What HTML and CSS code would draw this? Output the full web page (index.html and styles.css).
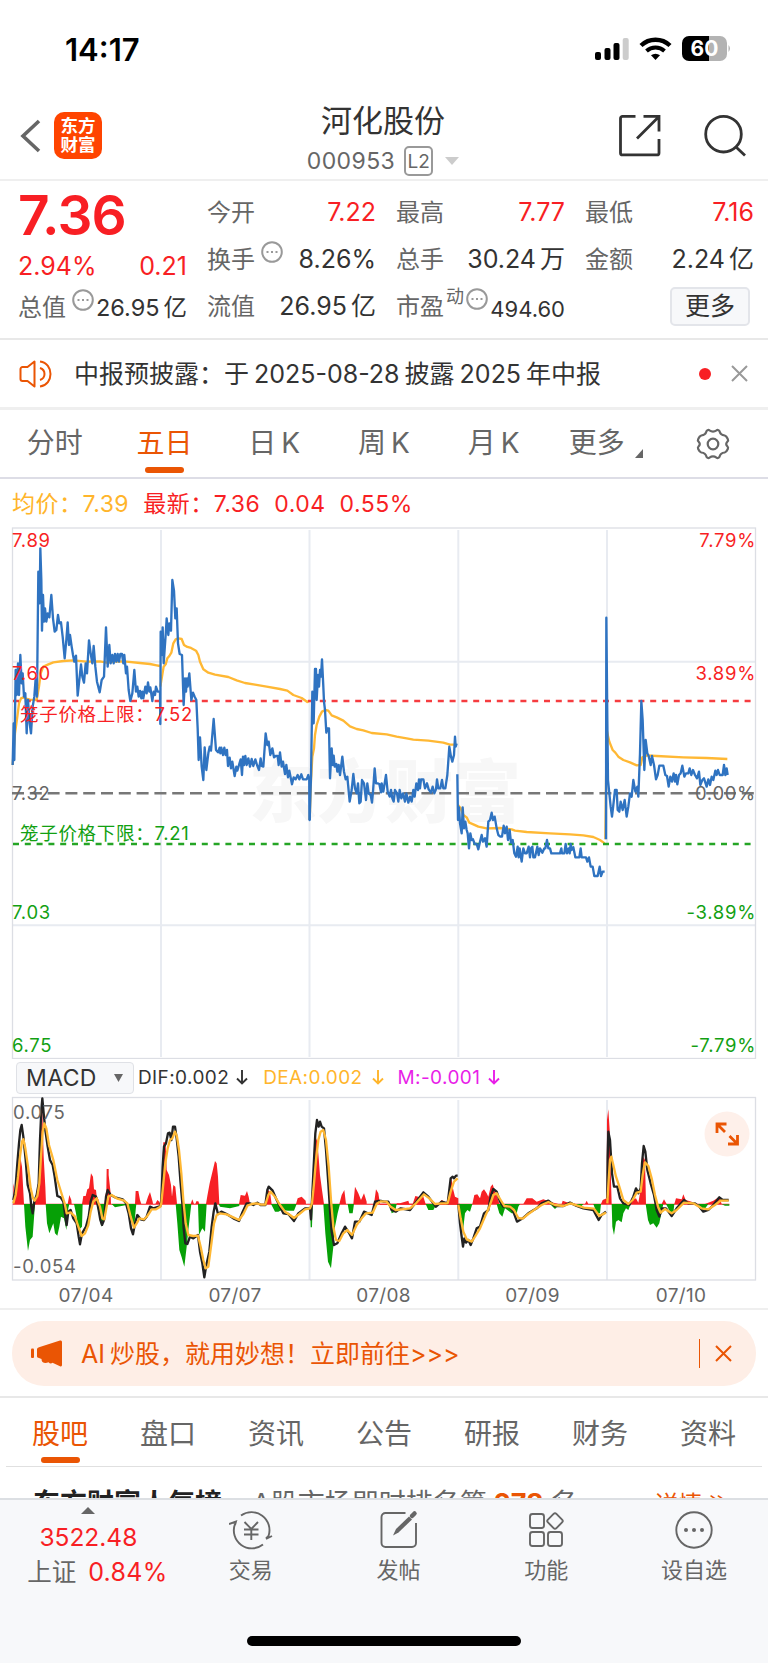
FILE: index.html
```
<!DOCTYPE html>
<html lang="zh-CN">
<head>
<meta charset="UTF-8">
<title>河化股份 000953</title>
<link rel="stylesheet" href="styles.css">
</head>
<body>

<div class="page">
    <div class="status-bar">
        <span class="time">14:17</span>
        <svg class="status-icons" width="140" height="28" viewBox="0 0 140 28">
            <rect x="0" y="17" width="6" height="8" rx="2"/>
            <rect x="9.500" y="13" width="6" height="12" rx="2"/>
            <rect x="18.500" y="8" width="6" height="17" rx="2"/>
            <rect x="27.700" y="3" width="6" height="22" rx="2" fill="#ccc"/>
            <path d="M46 10.500A21 21 0 0 1 75 10.500" fill="none" stroke="#000" stroke-width="4.400"/>
            <path d="M51.500 16A13.500 13.500 0 0 1 69.500 16" fill="none" stroke="#000" stroke-width="4"/>
            <path d="M56 20.300A7 7 0 0 1 65 20.300L60.500 25Z"/>
            <path d="M94 1h21v25h-21a7 7 0 0 1-7-7v-11a7 7 0 0 1 7-7z"/>
            <path d="M114 1h11a7 7 0 0 1 7 7v11a7 7 0 0 1-7 7h-11z" fill="#b3b3b3"/>
            <path d="M133.500 10q3 3.500 0 7z" fill="#b3b3b3"/>
            <text class="battery-text" x="109.500" y="21">60</text>
        </svg>
    </div>

    <div class="header">
        <div class="header-left">
            <svg width="22" height="34" viewBox="0 0 22 34"><path d="M19 2L3 17L19 32" fill="none" stroke="#666" stroke-width="3.600"/></svg>
            <div class="logo">东方<br>财富</div>
        </div>
        <div class="header-title">
            <div class="stock-name">河化股份</div>
            <div class="stock-code">
                <span>000953</span>
                <span class="level">L2</span>
                <svg width="14" height="8" viewBox="0 0 14 8"><path d="M0 0h14l-7 8z" fill="#ccc"/></svg>
            </div>
        </div>
        <div class="header-right">
            <svg width="44" height="44" viewBox="0 0 44 44" fill="none" stroke="#333" stroke-width="2.800">
                <path d="M17.500 2.400H4.500a2 2 0 0 0-2 2v34.500a2 2 0 0 0 2 2H39a2 2 0 0 0 2-2V25"/>
                <path d="M25.500 2.400H41V17.500M41 2.400L19 24.500"/>
            </svg>
            <svg width="44" height="44" viewBox="0 0 44 44" fill="none" stroke="#333" stroke-width="2.800">
                <circle cx="20.500" cy="20.200" r="17.800"/>
                <path d="M33 33L42 41.500"/>
            </svg>
        </div>
    </div>

    <div class="quote">
        <div class="quote-main">
            <div class="price">7.36</div>
            <div class="cell change"><span>2.94%</span><span>0.21</span></div>
            <div class="cell cap">
                <span class="label">总值<svg class="dots" width="22" height="22" viewBox="0 0 22 22"><circle cx="11" cy="11" r="9.800"/><path d="M5.500 11h2M10 11h2M14.500 11h2"/></svg></span>
                <span class="value small">26.95<i></i>亿</span>
            </div>
        </div>
        <div class="quote-col">
            <div class="cell"><span class="label">今开</span><span class="value red">7.22</span></div>
            <div class="cell">
                <span class="label">换手<svg class="dots" width="22" height="22" viewBox="0 0 22 22"><circle cx="11" cy="11" r="9.800"/><path d="M5.500 11h2M10 11h2M14.500 11h2"/></svg></span>
                <span class="value">8.26%</span>
            </div>
            <div class="cell"><span class="label">流值</span><span class="value">26.95<i></i>亿</span></div>
        </div>
        <div class="quote-col">
            <div class="cell"><span class="label">最高</span><span class="value red">7.77</span></div>
            <div class="cell"><span class="label">总手</span><span class="value">30.24<i></i>万</span></div>
            <div class="cell">
                <span class="label">市盈<sup>动</sup><svg class="dots tight" width="22" height="22" viewBox="0 0 22 22"><circle cx="11" cy="11" r="9.800"/><path d="M5.500 11h2M10 11h2M14.500 11h2"/></svg></span>
                <span class="value tiny">494.60</span>
            </div>
        </div>
        <div class="quote-col">
            <div class="cell"><span class="label">最低</span><span class="value red">7.16</span></div>
            <div class="cell"><span class="label">金额</span><span class="value">2.24<i></i>亿</span></div>
            <div class="cell more-cell"><span class="more-button">更多</span></div>
        </div>
    </div>

    <div class="notice">
        <svg width="34" height="30" viewBox="0 0 34 30" fill="none" stroke="#ea5504" stroke-width="2">
            <path d="M15.500 2.500v25l-7-5.500H3.500a2 2 0 0 1-2-2V10a2 2 0 0 1 2-2h5z" stroke-linejoin="round"/>
            <path d="M21 2.500c14 2 14 23 0 25M21 9c6 2 6 10 0 12"/>
        </svg>
        <span class="notice-text">中报预披露：于<i></i>2025-08-28<i></i>披露<i></i>2025<i></i>年中报</span>
        <span class="red-dot"></span>
        <svg width="17" height="17" viewBox="0 0 17 17"><path d="M1 1l15 15M16 1l-15 15" stroke="#999" stroke-width="2"/></svg>
    </div>

    <div class="k-tabs">
        <span>分时</span>
        <span class="active">五日</span>
        <span>日<i></i>K</span>
        <span>周<i></i>K</span>
        <span>月<i></i>K</span>
        <span class="k-more">更多<svg width="8" height="9" viewBox="0 0 8 9"><path d="M8 0v9H0z" fill="#666"/></svg></span>
        <span class="k-gear"><svg width="34" height="32" viewBox="0 0 34 32" fill="none" stroke="#666" stroke-width="2.200" stroke-linejoin="round">
            <path d="M10.500 3.200Q12 1.200 13.500 2.400Q17 4.800 20.500 2.400Q22 1.200 23.500 3.200Q24.500 7 28.700 7.500Q30.500 8 31.800 11Q32.500 12.500 31.500 13.500Q29 16 31.500 18.500Q32.500 19.500 31.800 21Q30.500 24 28.700 24.500Q24.500 25 23.500 28.800Q22 30.800 20.500 29.600Q17 27.200 13.500 29.600Q12 30.800 10.500 28.800Q9.500 25 5.300 24.500Q3.500 24 2.200 21Q1.500 19.500 2.500 18.500Q5 16 2.500 13.500Q1.500 12.500 2.200 11Q3.500 8 5.300 7.500Q9.500 7 10.500 3.200Z"/>
            <circle cx="17" cy="16" r="5.300"/>
        </svg></span>
    </div>

    <div class="averages">
        <span class="orange">均价：7.39</span>
        <span>最新：7.36</span>
        <span>0.04</span>
        <span>0.55%</span>
    </div>

    <svg class="price-chart" width="768" height="532" viewBox="0 527 768 532">
        <text class="watermark" x="385" y="817">东方财富</text>
        <g class="grid">
            <path d="M161 530V1057M309.500 530V1057M458.300 530V1057M607 530V1057M12 661.700H755M12 925.300H755"/>
            <rect class="frame" x="12.500" y="528" width="743" height="530.500"/>
        </g>
        <g class="avg-line">
            <polyline transform="translate(0 520) scale(.33333)" points="38,735 45,640 52,590 57,550 63,535 70,532 78,536 90,539 110,540 117,500 122,460 130,440 145,433 160,427 190,423 220,421 260,425 300,424 320,428 350,424 380,425 420,429 450,432 470,436 480,438"/>
            <polyline transform="translate(0 520) scale(.33333)" points="481,500 486,470 491,440 497,433 502,415 508,408 514,398 520,370 527,358 535,355 545,357 552,375 562,381 573,384 588,392 595,405 600,425 610,448 625,458 645,464 685,471 710,481 735,489 765,494 800,500 840,507 862,512 880,525 905,534 922,546 928,543"/>
            <polyline transform="translate(300 620) scale(.33333)" points="29,600 33,480 37,410 42,385 45,345 50,315 58,290 66,275 76,270 85,272 95,286 110,292 130,302 150,319 170,327 190,331 215,339 260,343 290,350 320,355 340,359 385,362 430,368 450,374 470,374"/>
            <polyline transform="translate(300 620) scale(.33333)" points="474,555 482,565 490,585 500,592 508,608 520,613 535,620 560,625 600,624 635,628 645,632 680,636 750,640 810,643 850,646 880,651 900,660 914,670"/>
            <polyline transform="translate(450 520) scale(.33333)" points="466,958 468,800 470,630 478,665 488,690 496,698 505,710 520,720 540,727 560,736 572,735 577,712 590,706 620,708 700,712 770,714 832,717"/>
        </g>
        <path class="limit-line upper" d="M13 701H755"/>
        <path class="base-line" d="M12 793.300H755"/>
        <path class="limit-line lower" d="M13 844H755"/>
        <g class="price-line">
            <polyline transform="translate(0 520) scale(.33333)" points="38,735 41,610 43,720 47,450 50,525 54,430 57,525 61,405 65,490 68,460 72,530 76,520 80,640 84,540 89,610 93,640 98,560 103,530 107,475 111,530 115,155 119,250 121,85 124,180 126,332 129,225 132,305 135,265 139,305 143,280 148,292 154,225 159,295 164,335 169,330 174,285 178,310 183,307 188,350 194,415 199,360 203,307 207,375 210,345 215,380 219,405 223,425 228,407 233,527 238,480 243,433 247,470 252,488 257,430 261,460 267,361 272,400 277,430 281,378 286,440 291,485 299,517 305,480 312,470 318,322 323,440 328,375 332,430 337,405 341,430 345,402 349,425 353,402 357,425 361,402 366,402 370,430 373,405 378,460 381,440 386,510 391,543 397,520 403,450 408,515 412,500 416,530 420,513 424,535 427,515 430,535 436,500 440,520 444,487 448,515 451,502 457,543 461,515 465,525 468,500 473,515 480,515 481,612 482,335 485,405 488,322 491,430 497,345 500,295 505,345 508,310 513,332 517,180 522,212 526,295 530,265 534,370 539,402 546,405 551,555 555,475 558,515 561,475 563,500 568,460 574,540 579,518 584,530 589,540 593,625 596,720 600,652 605,740 610,780 614,682 619,750 625,700 629,680 633,692 641,597 648,690 654,697 659,683 661,700 664,683 669,705 673,683 677,705 681,690 684,738 689,713 693,745 697,725 704,768 709,740 712,752 717,735 722,718 726,765 729,710 732,735 736,708 740,735 745,715 750,740 755,717 760,738 766,718 771,735 777,750 782,715 785,738 790,740 797,640 802,675 806,665 811,705 817,685 822,712 827,708 833,708 836,735 840,697 845,740 849,725 855,762 859,735 864,772 868,752 876,793 881,772 887,778 893,765 898,778 904,763 909,778 920,778 925,765 928,778 929,900"/>
            <polyline transform="translate(300 620) scale(.33333)" points="29,470 29,600 33,470 37,215 41,310 45,147 48,147 50,240 54,165 57,200 60,150 63,170 66,118 70,200 72,245 75,270 79,338 82,325 87,325 90,475 95,385 98,435 101,407 104,440 109,432 112,455 116,435 120,465 127,410 132,455 137,478 142,470 149,545 155,510 160,462 165,505 170,520 174,490 178,550 182,545 186,480 192,490 198,540 202,490 206,520 212,525 216,548 219,515 224,445 228,490 233,490 238,492 243,517 245,490 250,515 258,465 263,515 269,530 273,510 277,535 281,545 285,510 291,520 295,545 299,510 304,535 309,520 315,545 319,520 325,548 330,530 335,545 340,510 344,530 349,490 354,510 357,478 360,505 363,478 370,478 375,505 381,490 386,508 393,518 398,500 403,520 408,508 411,478 415,505 421,505 426,480 430,505 436,505 442,465 448,380 453,410 457,425 462,405 465,350 467,380 470,370"/>
            <polyline transform="translate(300 620) scale(.33333)" points="472,463 474,600 477,562 480,610 485,640 488,562 492,625 496,605 500,630 503,640 507,685 511,640 515,660 519,658 524,672 530,672 535,688 540,665 545,645 549,665 555,655 560,680 565,605 570,600 575,578 579,600 584,590 590,625 595,645 601,650 606,650 611,617 615,640 620,620 624,660 629,630 633,668 638,660 643,700 648,710 653,680 656,712 659,685 665,725 670,685 675,700 680,700 686,680 690,712 693,685 697,680 700,712 705,712 712,680 716,705 720,685 727,698 733,685 736,685 741,660 745,685 750,685 754,700 780,700 784,685 786,700 793,700 797,672 801,700 806,685 809,700 812,672 815,690 820,682 826,712 838,712 842,685 845,712 858,712 862,725 867,712 872,740 878,740 883,768 893,768 899,740 903,768 908,755 914,755"/>
            <polyline transform="translate(450 520) scale(.33333)" points="468,958 469,293 472,600 474,780 478,820 482,860 486,890 490,855 495,810 500,810 503,870 508,875 512,845 518,870 524,840 530,890 535,860 540,820 545,830 550,780 556,815 562,800 565,830 570,700 574,543 578,600 583,750 587,660 592,700 596,708 602,735 606,708 612,735 618,778 623,765 628,737 640,737 646,765 651,768 656,800 661,770 666,785 671,760 675,785 678,765 682,793 687,765 692,760 697,737 703,770 708,760 715,760 719,745 724,765 729,750 735,765 741,775 747,755 751,795 757,780 762,775 770,800 775,778 780,795 785,770 790,780 796,752 800,765 804,750 809,765 818,765 822,735 826,765 830,745 833,765"/>
        </g>
        <g class="axis">
            <text class="up" x="12" y="547">7.89</text>
            <text class="up" x="12" y="679.500">7.60</text>
            <text x="12" y="799.500">7.32</text>
            <text class="down" x="12" y="919">7.03</text>
            <text class="down" x="12" y="1051.500">6.75</text>
            <text class="up end" x="756" y="547">7.79%</text>
            <text class="up end" x="756" y="679.500">3.89%</text>
            <text class="end" x="756" y="799.500">0.00%</text>
            <text class="down end" x="756" y="919">-3.89%</text>
            <text class="down end" x="756" y="1051.500">-7.79%</text>
            <text class="up" x="20" y="720.500">笼子价格上限：7.52</text>
            <text class="down" x="20" y="839.500">笼子价格下限：7.21</text>
        </g>
    </svg>

    <div class="macd-row">
        <span class="macd-select">MACD<svg width="9" height="8" viewBox="0 0 9 8"><path d="M0 0h9l-4.500 8z" fill="#666"/></svg></span>
        <span class="dif">DIF:0.002<svg class="arrow" width="12" height="15" viewBox="0 0 12 15"><path d="M6 0v13.500M1 8.500l5 5l5-5"/></svg></span>
        <span class="dea">DEA:0.002<svg class="arrow" width="12" height="15" viewBox="0 0 12 15"><path d="M6 0v13.500M1 8.500l5 5l5-5"/></svg></span>
        <span class="m">M:-0.001<svg class="arrow" width="12" height="15" viewBox="0 0 12 15"><path d="M6 0v13.500M1 8.500l5 5l5-5"/></svg></span>
    </div>

    <svg class="macd-chart" width="768" height="213" viewBox="0 1095 768 213">
        <g class="grid">
            <path d="M161 1100V1280M309.500 1100V1280M458.300 1100V1280M607 1100V1280"/>
            <rect class="frame" x="12.500" y="1097.500" width="743" height="182.500"/>
        </g>
        <g class="bars-up" transform="translate(0 1060) scale(.33333)">
            <path d="M38 434V431H1380V434Z"/>
            <path d="M40 432V370L46 400L50 355L56 290L60 285L66 320L72 432ZM103 432L110 410L117 340L121 250L127 150L131 290L136 380L138 432ZM203 432L208 405L214 420L215 432ZM246 432L250 408L257 408L262 388L267 385L273 340L279 350L282 388L288 390L290 408L296 420L297 432ZM313 432L316 410L319 390L320 327H326V345L332 400L333 432ZM405 432L407 393H415L420 420L424 432ZM437 432L444 410L450 396L458 425L459 432ZM466 432L472 420L478 425L480 432Z"/>
            <path d="M484 432L487 310L490 247H497L500 330L507 345L513 375L516 410L520 375L526 380L530 420L531 432ZM572 432L577 418L582 432ZM586 432L589 424H595L598 432ZM618 432L622 408L629 370L635 345L645 303L650 310L654 350L658 432ZM717 432L722 405L735 407L741 393L746 410L750 432ZM796 432L802 388L810 395L815 432ZM888 432L893 415L905 410L917 422L918 432Z"/>
            <path d="M938 432L942 260L950 235L955 280L960 345L966 390L972 432ZM1018 432L1025 405L1033 390L1038 432ZM1060 432L1065 380L1075 400L1083 420L1092 400L1100 425V432ZM1122 432L1128 388L1135 400L1140 432Z"/>
        </g>
        <g class="bars-up" transform="translate(380 1060) scale(.33333)">
            <path d="M50 432V430L60 430L85 422L88 432ZM98 432L106 408L120 412L130 410L137 432ZM175 432L185 420L200 428L207 400L213 350L220 390L225 410L235 415V432ZM277 432L283 405L292 403L300 415L305 395L312 388L320 400L325 410L332 380L338 373L345 395L352 410L358 432ZM430 432L440 415H457L470 425L490 418L510 425L535 432ZM545 432L548 422L565 428L575 432ZM615 432L620 422L625 432ZM663 432L668 420L680 415L681 180L685 148L689 210L691 290L695 432ZM752 432L757 420L768 415L775 428L780 400L785 345L790 290L795 300L798 432ZM845 432L852 418L860 432ZM883 432L888 415L905 418L910 403L917 420L935 425L940 432ZM975 432L1000 422L1018 410L1025 432Z"/>
            <path d="M0 434V431H1048V434Z"/>
        </g>
        <g class="bars-down" transform="translate(0 1060) scale(.33333)">
            <path d="M72 432L76 500L84 573L90 540L98 530L105 432ZM137 432L141 490L148 520L154 505L160 490L165 520L172 527L178 500L183 470L192 475L199 510L205 445L208 432ZM222 432L228 460L236 510L246 500L248 432ZM290 432L297 465L304 500L312 470L316 432ZM335 432L345 442L380 435L385 440L393 480L402 510L407 450L409 432Z"/>
            <path d="M527 432L532 490L538 570L545 592L553 620L560 560L565 510L574 432ZM594 432L597 525L607 505L615 515L620 432ZM656 432L660 440L690 445L718 438V432ZM813 432L825 455H835L845 450L865 452H882L890 432ZM930 432L932 502H936L938 432ZM970 432L976 520L984 605L993 625L1000 560L1005 500L1013 460L1020 432ZM1043 432L1048 460H1058L1062 432Z"/>
        </g>
        <g class="bars-down" transform="translate(380 1060) scale(.33333)">
            <path d="M28 432L35 460L45 455L50 432ZM137 432L145 450H160L170 432ZM236 432L240 490L248 520L255 460L262 450L270 455L277 432ZM350 432L358 460L367 470L375 445L395 460H410L415 440L420 432ZM510 432L525 447L540 432ZM580 432L590 441L605 438L610 432ZM640 432L650 460H660L663 432ZM695 432L697 500L702 525L708 485L715 480L725 487L730 460L738 445L745 450L752 432ZM797 432L804 480L810 495L820 490L830 503L838 490L845 455L850 432ZM858 432L870 455L880 460L883 432ZM955 432L972 450L985 432ZM1025 433L1035 437H1048V433Z"/>
        </g>
        <g class="dif-line">
            <polyline transform="translate(0 1060) scale(.33333)" points="40,420 46,390 52,310 57,250 61,210 65,195 70,230 77,300 83,375 90,400 94,440 98,460 103,425 110,405 116,370 120,240 124,150 127,115 131,160 136,210 143,260 150,300 158,315 164,350 172,408 182,412 190,425 196,470 200,495 205,455 212,450 220,475 230,490 236,530 240,553 246,520 258,500 266,470 272,425 278,405 288,410 296,450 301,480 306,495 312,480 318,410 323,390 332,405 345,412 368,418 378,430 386,460 393,505 399,523 405,490 412,465 422,478 432,480 440,470 450,440 460,445 481,438 484,420 488,320 492,260 498,250 504,220 509,218 514,240 519,200 525,200 530,235 536,290 541,360 547,430 551,505 556,550 562,552 570,530 580,535 594,525 600,575 607,610 613,652 619,615 628,575 635,500 641,455 646,430 654,462 664,455 680,462 700,475 717,483 728,455 740,430 750,430 760,435 772,428 782,435 796,435 802,390 806,380 818,392 830,420 850,460 865,462 882,483 895,460 915,445 930,445 933,478 936,420 941,320 946,220 951,180 956,200 960,185 965,200 972,205 978,270 985,370 990,450 995,515 1002,555 1012,550 1025,520 1035,500 1048,520 1056,535 1065,485 1078,485 1092,455 1115,465 1125,425 1140,422"/>
            <polyline transform="translate(380 1060) scale(.33333)" points="0,422 12,425 25,425 35,450 47,455 62,445 90,450 105,430 130,397 145,410 160,430 168,440 185,425 203,430 212,355 218,350 222,355 228,347 233,347"/>
            <polyline transform="translate(380 1060) scale(.33333)" points="235,432 240,490 245,530 249,560 253,535 258,548 265,540 272,555 280,535 290,505 300,500 312,460 325,450 332,410 340,387 350,395 360,425 370,440 380,438 390,440 400,455 411,485 428,475 445,460 470,445 485,430 505,422 525,438 550,438 570,428 590,438 610,445 640,450 656,480 665,465 678,455"/>
            <polyline transform="translate(380 1060) scale(.33333)" points="682,415 683,290 685,215 690,240 696,340 702,380 712,380 720,415 730,430 748,435 760,410 768,385 775,400 782,385 786,310 791,258 796,275 802,330 812,370 822,405 830,450 838,470 846,445 858,445 875,468 890,445 912,420 925,430 945,430 958,440 970,455 985,450 1000,435 1018,412 1028,420 1046,420"/>
        </g>
        <g class="dea-line">
            <polyline transform="translate(0 1060) scale(.33333)" points="40,430 47,405 54,350 60,290 66,245 70,238 76,265 84,320 92,385 99,415 104,422 112,408 118,370 123,290 128,215 133,190 139,205 147,255 160,300 172,360 186,405 194,430 200,460 212,457 225,470 235,500 245,528 255,520 265,495 272,455 280,425 290,415 300,440 307,475 313,478 319,445 325,410 335,405 350,415 372,422 382,430 392,470 402,503 410,490 418,475 432,478 442,468 455,448 468,448 481,440 484,430 490,370 496,310 503,265 510,240 517,235 525,215 531,230 537,270 544,340 550,420 557,490 565,525 580,528 594,527 602,560 610,600 617,625 625,620 633,560 642,490 650,465 660,460 680,463 700,472 717,480 730,462 742,437 755,432 770,430 783,434 796,434 805,405 812,395 825,410 840,435 855,455 870,465 882,474 898,462 915,448 930,445 936,430 942,370 948,300 955,240 962,215 970,210 978,240 986,320 993,420 1000,500 1008,540 1018,543 1030,520 1042,510 1056,525 1070,495 1085,475 1098,460 1118,458 1130,432 1140,425"/>
            <polyline transform="translate(380 1060) scale(.33333)" points="0,424 20,425 32,440 47,450 65,448 90,445 108,430 132,403 148,415 165,432 185,430 203,430 212,395 222,365 233,355"/>
            <polyline transform="translate(380 1060) scale(.33333)" points="235,434 242,475 250,515 260,538 275,545 285,530 300,505 315,470 328,440 340,405 350,400 362,420 373,438 390,440 402,450 415,474 428,476 445,462 465,448 485,435 505,426 525,435 550,438 572,430 592,437 612,443 642,446 658,468 678,458"/>
            <polyline transform="translate(380 1060) scale(.33333)" points="682,430 686,360 690,300 694,290 700,315 708,350 718,380 730,420 745,432 758,420 770,398 782,395 788,345 795,307 805,318 815,355 825,405 834,440 842,458 855,447 875,460 890,450 912,428 940,430 965,445 985,448 1005,435 1022,422 1046,422"/>
        </g>
        <g class="axis">
            <text x="13" y="1119">0.075</text>
            <text x="13" y="1272.500">-0.054</text>
        </g>
        <g class="dates">
            <text x="86" y="1302">07/04</text>
            <text x="235" y="1302">07/07</text>
            <text x="383.500" y="1302">07/08</text>
            <text x="532.500" y="1302">07/09</text>
            <text x="681" y="1302">07/10</text>
        </g>
        <circle cx="727" cy="1134" r="22.500" fill="#fef0ea"/>
        <path d="M717 1133V1124H726.500M717.500 1124.500L725 1132M737.500 1135V1144H728M737 1143.500L729.500 1136" fill="none" stroke="#ea5504" stroke-width="2.800"/>
    </svg>

    <div class="ad">
        <div class="banner">
            <svg width="32" height="27" viewBox="0 0 32 27" fill="#ea5504">
                <rect x="0" y="8.500" width="3" height="9.500" rx="1"/>
                <path d="M6 9Q6.200 8 8 7.200L29 .6Q31 0 31 2V25Q31 27 29 26.200L21.500 22.800Q19.500 24.500 17.500 22.300Q14 24 11.500 22Q10.500 21 10.500 19L8 18Q6 17.500 6 16.500Z"/>
            </svg>
            <span class="banner-text">AI<i></i>炒股，就用妙想！立即前往&gt;&gt;&gt;</span>
            <span class="banner-line"></span>
            <svg width="17" height="17" viewBox="0 0 17 17"><path d="M1 1l15 15M16 1l-15 15" stroke="#ea5504" stroke-width="2"/></svg>
        </div>
    </div>

    <div class="info-tabs">
        <span class="active">股吧</span>
        <span>盘口</span>
        <span>资讯</span>
        <span>公告</span>
        <span>研报</span>
        <span>财务</span>
        <span>资料</span>
    </div>

    <div class="rank">
        <span class="rank-name">东方财富人气榜</span>
        <span class="rank-text">A股市场即时排名第<b>278</b>名</span>
        <span class="rank-more">详情 ≫</span>
    </div>

    <div class="bottom-bar">
        <div class="index">
            <svg width="14" height="7" viewBox="0 0 14 7"><path d="M0 7L7 0L14 7z" fill="#666"/></svg>
            <div class="index-value">3522.48</div>
            <div class="index-change"><span>上证</span><span class="index-pct">0.84%</span></div>
        </div>
        <div class="action">
            <svg width="44" height="40" viewBox="0 0 44 40" fill="none" stroke="#666" stroke-width="1.900">
                <path d="M12 5.500A18 18 0 0 1 39.500 26L37 28.500M37 29L43 26"/>
                <path d="M34 34.500A18 18 0 0 1 6 14L6.500 11.500M0 14L7 11.500L6 15"/>
                <path d="M15.500 12L22.300 19L29 12M22.300 19V30M15 19.500H29.500M15 24.500H29.500"/>
            </svg>
            <span>交易</span>
        </div>
        <div class="action">
            <svg width="44" height="40" viewBox="0 0 44 40" fill="none" stroke="#666" stroke-width="1.900">
                <path d="M29.500 3H9.500a4 4 0 0 0-4 4v26a4 4 0 0 0 4 4H36a4 4 0 0 0 4-4V13"/>
                <path d="M17 25.500L20 19L33 6.500L36 9.500L22.500 22.500Z" fill="#666" stroke="none"/>
                <path d="M36 6L38.500 3.500" stroke-width="4.500" stroke-linecap="round"/>
            </svg>
            <span>发帖</span>
        </div>
        <div class="action">
            <svg width="44" height="40" viewBox="0 0 44 40" fill="none" stroke="#666" stroke-width="1.900">
                <rect x="6" y="4" width="14" height="14" rx="2.500"/>
                <rect x="6" y="22" width="14" height="14" rx="2.500"/>
                <rect x="24" y="22" width="14" height="14" rx="2.500"/>
                <rect x="25" y="5" width="12" height="12" rx="2" transform="rotate(45 31 11)"/>
            </svg>
            <span>功能</span>
        </div>
        <div class="action">
            <svg width="44" height="40" viewBox="0 0 44 40" fill="none" stroke="#666" stroke-width="1.900">
                <circle cx="22" cy="20" r="17.700"/>
                <g fill="#666" stroke="none"><circle cx="14" cy="20" r="2"/><circle cx="22" cy="20" r="2"/><circle cx="30" cy="20" r="2"/></g>
            </svg>
            <span>设自选</span>
        </div>
        <div class="home-line"></div>
    </div>
</div>

</body>
</html>
```

FILE: styles.css
```
* {
    box-sizing: border-box;
}

body {
    margin: 0;
    background-color: #fff;
    color: #333;
    font-family: 'Inter', 'Noto Sans CJK SC', sans-serif;
}

svg {
    display: block;
    flex-shrink: 0;
}

.page {
    width: 768px;
    height: 1663px;
    overflow: hidden;
    position: relative;
}

/* Status bar and header */
.status-bar {
    height: 92px;
    display: flex;
    justify-content: space-between;
    padding: 35px 33px 0 65px;
}

.time {
    font-size: 31px;
    font-weight: 600;
    line-height: 29px;
    color: #000;
}

.battery-text {
    font-size: 21px;
    font-weight: 700;
    fill: #fff;
    text-anchor: middle;
}

.header {
    height: 89px;
    display: grid;
    grid-template-columns: 1fr 240px 1fr;
    border-bottom: 2px solid #efefef;
}

.header-left {
    display: flex;
    align-items: center;
    gap: 12px;
    padding-left: 20px;
}

.logo {
    width: 48px;
    height: 47px;
    border-radius: 10px;
    background-color: #ff4400;
    color: #fff;
    font-size: 17.500px;
    font-weight: 700;
    line-height: 19px;
    padding-top: 4px;
    text-align: center;
}

.header-title {
    padding: 10px 2px 0 0;
    text-align: center;
}

.stock-name {
    font-size: 31px;
    line-height: 38px;
}

.stock-code {
    display: flex;
    align-items: center;
    justify-content: center;
    margin-top: 6px;
    font-size: 23px;
    line-height: 30px;
    letter-spacing: 0.4px;
    color: #666;
}

.level {
    width: 29px;
    height: 30px;
    border: 2px solid #999;
    border-radius: 5px;
    font-size: 19px;
    line-height: 27px;
    letter-spacing: 0;
    margin: 0 12px 0 9px;
}

.header-right {
    display: flex;
    justify-content: flex-end;
    align-items: center;
    gap: 41px;
    padding-right: 21px;
}

/* Quote */
.quote {
    height: 159px;
    display: grid;
    grid-template-columns: repeat(4, 169px);
    column-gap: 20px;
    padding: 6px 0 0 18px;
    border-bottom: 2px solid #e8e8e8;
}

.quote-col {
    padding-top: 2px;
}

.price {
    height: 56px;
    font-size: 55px;
    font-weight: 600;
    line-height: 56px;
    letter-spacing: -0.8px;
    color: #f81f24;
}

.cell {
    height: 47px;
    display: flex;
    align-items: center;
    justify-content: space-between;
    font-size: 24px;
    line-height: 47px;
    white-space: nowrap;
}

.change {
    font-size: 25px;
    color: #f81f24;
}

.cap {
    height: 36px;
    line-height: 36px;
}

.label {
    display: flex;
    align-items: center;
    color: #666;
}

.label sup {
    font-size: 18px;
    line-height: 20px;
    margin: -20px 0 0 2px;
}

.dots {
    margin: -16px 0 0 6px;
    fill: none;
    stroke: #999;
    stroke-width: 2;
}

.dots.tight {
    margin-left: 2px;
}

.value {
    font-size: 25px;
}

.value i {
    display: inline-block;
    width: 4px;
}

.value.small {
    font-size: 23.500px;
}

.value.tiny {
    font-size: 22px;
    padding-top: 6px;
}

.red {
    color: #f81f24;
}

.more-cell {
    justify-content: flex-end;
    padding-right: 4px;
}

.more-button {
    width: 80px;
    height: 39px;
    border: 2px solid #e3e5ea;
    border-radius: 5px;
    background-color: #f7f8fa;
    font-size: 25px;
    line-height: 35px;
    text-align: center;
}

/* Notice */
.notice {
    height: 70px;
    display: flex;
    align-items: center;
    padding: 0 20px 0 19px;
    border-bottom: 3px solid #efefef;
}

.notice-text {
    flex: 1;
    margin-left: 21px;
    font-size: 25px;
    line-height: 40px;
}

.notice-text i,
.k-tabs i,
.banner-text i {
    display: inline-block;
    width: 5px;
}

.red-dot {
    width: 12px;
    height: 12px;
    border-radius: 50%;
    background-color: #f81f24;
    margin-right: 20px;
}

/* Chart tabs */
.k-tabs {
    height: 69px;
    display: grid;
    grid-template-columns: repeat(7, 109.700px);
    border-bottom: 2px solid #dddde6;
    font-size: 28px;
    line-height: 67px;
    color: #666;
    text-align: center;
}

.k-tabs .active,
.info-tabs .active {
    color: #ea5504;
    display: flex;
    flex-direction: column;
    align-items: center;
}

.k-tabs .active::after,
.info-tabs .active::after {
    content: '';
    width: 39px;
    height: 6px;
    border-radius: 3px;
    background-color: #ea5504;
    margin-top: -10px;
}

.info-tabs .active::after {
    margin-top: -13px;
}

.k-more {
    display: flex;
    justify-content: center;
    align-items: center;
    gap: 10px;
    padding-left: 5px;
}

.k-more svg {
    margin-top: 20px;
}

.k-gear {
    display: flex;
    justify-content: center;
    align-items: center;
}

.averages {
    height: 48px;
    display: flex;
    gap: 14px;
    padding-left: 12px;
    font-size: 23px;
    line-height: 50px;
    letter-spacing: 0.5px;
    color: #f81f24;
}

.orange {
    color: #ffb52b;
}

/* Price chart */
.grid {
    fill: none;
    stroke: #e8ebf1;
    stroke-width: 2;
}

.frame {
    stroke: #dcdee4;
    stroke-width: 1.300;
}

.watermark {
    font-size: 68px;
    font-weight: 900;
    fill: #f7f7f7;
    text-anchor: middle;
}

.avg-line,
.price-line,
.dif-line,
.dea-line {
    fill: none;
    stroke-linejoin: round;
    stroke-width: 7;
}

.avg-line {
    stroke: #ffb834;
}

.price-line {
    stroke: #2f73c1;
}

.limit-line {
    stroke-width: 2.500;
    stroke-dasharray: 6 5.800;
}

.upper {
    stroke: #f63c40;
}

.lower {
    stroke: #25a525;
}

.base-line {
    stroke: #777;
    stroke-width: 2.500;
    stroke-dasharray: 12 5.800;
}

.axis {
    font-size: 18.500px;
    letter-spacing: 0.7px;
    fill: #666;
}

.up {
    fill: #f81f24;
}

.down {
    fill: #12a012;
}

.end {
    text-anchor: end;
}

/* MACD */
.macd-row {
    height: 36px;
    display: flex;
    align-items: center;
    padding: 1px 0 0 16px;
    font-size: 19px;
    letter-spacing: 0.4px;
}

.macd-select {
    width: 118px;
    height: 32px;
    display: flex;
    align-items: center;
    justify-content: space-between;
    padding: 0 10px 0 9px;
    border: 1.500px solid #dfe1e6;
    border-radius: 4px;
    background-color: #f7f8fa;
    font-size: 23px;
}

.dif,
.dea,
.m {
    display: flex;
    align-items: center;
    gap: 7px;
    margin-left: 4px;
}

.dea {
    color: #ffb52b;
    gap: 9px;
    margin-left: 15px;
}

.m {
    color: #e81ee8;
    gap: 8px;
    margin-left: 14px;
}

.arrow {
    fill: none;
    stroke: currentColor;
    stroke-width: 1.900;
}

.bars-up {
    fill: #f72024;
}

.bars-down {
    fill: #06a006;
}

.dif-line {
    stroke: #222;
}

.dea-line {
    stroke: #ffb834;
}

.dates {
    font-size: 19px;
    letter-spacing: 0.3px;
    fill: #666;
    text-anchor: middle;
}

/* Banner */
.ad {
    height: 90px;
    padding: 11px 12px 0;
    border-top: 2px solid #efefef;
    border-bottom: 2px solid #e8e8e8;
}

.banner {
    height: 65px;
    display: flex;
    align-items: center;
    padding: 0 24px 0 19px;
    border-radius: 32px;
    background-color: #feeee6;
    color: #ea5504;
}

.banner-text {
    flex: 1;
    margin-left: 18px;
    padding-bottom: 4px;
    font-size: 25px;
}

.banner-line {
    width: 1.500px;
    height: 29px;
    background-color: #ea5504;
    margin-right: 15px;
}

/* Info tabs */
.info-tabs {
    height: 69px;
    display: grid;
    grid-template-columns: repeat(7, 108px);
    margin: 0 6px;
    border-bottom: 1.500px solid #e0e0e0;
    font-size: 28px;
    line-height: 72px;
    color: #666;
    text-align: center;
}

.rank {
    display: flex;
    align-items: baseline;
    padding: 17px 35px 0 33px;
    font-size: 27px;
    line-height: 40px;
    color: #666;
    white-space: nowrap;
}

.rank-name {
    font-weight: 700;
    color: #222;
}

.rank-text {
    flex: 1;
    margin-left: 30px;
}

.rank-text b {
    color: #ea5504;
    margin: 0 7px;
}

.rank-more {
    font-size: 24px;
    color: #ea5504;
}

/* Bottom bar */
.bottom-bar {
    position: absolute;
    left: 0;
    bottom: 0;
    width: 768px;
    height: 165px;
    display: flex;
    background-color: #f7f8fa;
    border-top: 2px solid #dcdfe3;
    color: #666;
}

.index {
    width: 177px;
    display: flex;
    flex-direction: column;
    align-items: center;
    padding-top: 7px;
    font-size: 24.500px;
}

.index-value {
    margin-top: 6px;
    line-height: 35px;
    color: #f81f24;
}

.index-change {
    display: flex;
    gap: 12px;
    padding-left: 18px;
    line-height: 34px;
}

.index-pct {
    font-size: 25px;
    letter-spacing: 0.3px;
    color: #f81f24;
}

.action {
    width: 148px;
    display: flex;
    flex-direction: column;
    align-items: center;
    padding-top: 10px;
    font-size: 22px;
    line-height: 40px;
}

.home-line {
    position: absolute;
    left: 247px;
    bottom: 17px;
    width: 274px;
    height: 10px;
    border-radius: 5px;
    background-color: #000;
}
```
